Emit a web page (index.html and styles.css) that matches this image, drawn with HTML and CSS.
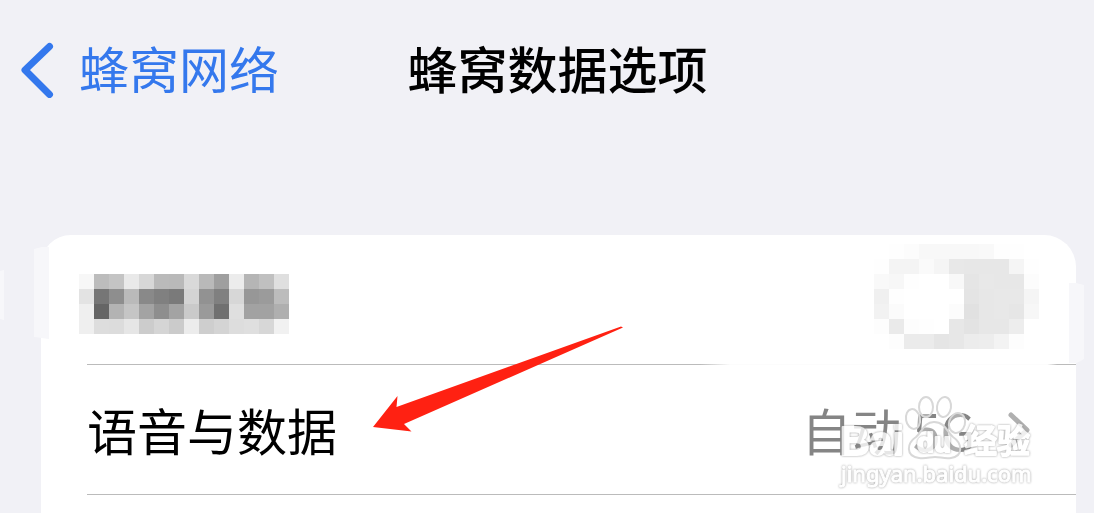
FILE: index.html
```html
<!DOCTYPE html>
<html lang="zh-CN">
<head>
<meta charset="utf-8">
<meta name="viewport" content="width=device-width, initial-scale=1">
<title>蜂窝数据选项</title>
<link rel="stylesheet" href="styles.css">
</head>
<body>
<header class="nav">
  <a class="back" href="#">
    <svg class="back-icon" viewBox="0 0 34 56" aria-hidden="true"><path d="M28.500 4.500 4 28 28.500 52.500"/></svg>
    <span class="back-label">蜂窝网络</span>
  </a>
  <h1 class="title">蜂窝数据选项</h1>
</header>
<main class="card">
  <svg class="smudge smudge-left" viewBox="0 0 15 92" aria-hidden="true"><path d="M0 2 8 0H15V92L0 90Z"/></svg>
  <svg class="smudge smudge-right" viewBox="0 0 15 98" aria-hidden="true"><path d="M0 0V80H8L15 76V2L7 0Z"/></svg>
  <svg class="smudge smudge-edge" viewBox="0 0 15 50" aria-hidden="true"><path d="M0 4 15 0V50L0 46Z"/></svg>
  <div class="row row-switch">
    <svg class="mosaic mosaic-label" viewBox="0 0 14 4" shape-rendering="crispEdges" aria-hidden="true"></svg>
    <label class="switch">
      <input class="switch-input" type="checkbox" role="switch" aria-label="5G">
      <svg class="mosaic mosaic-switch" viewBox="0 0 11 7" shape-rendering="crispEdges" aria-hidden="true"></svg>
    </label>
  </div>
  <a class="row row-link" href="#">
    <span class="label">语音与数据</span>
    <span class="value">自动 5G</span>
    <svg class="chevron" viewBox="0 0 24 40" aria-hidden="true"><path d="M4 5 20 20 4 35"/></svg>
  </a>
  <svg class="arrow" viewBox="0 0 252 106" aria-hidden="true"><path d="M1 101 25.500 70 24.500 81 249 .5 251 1.500 32 98 39.500 105.500Z"/></svg>
  <svg class="watermark" viewBox="0 0 204 102" role="img" aria-label="Baidu 经验">
    <g class="paw">
      <ellipse cx="79" cy="28" rx="7" ry="10" transform="rotate(-10 79 28)"/>
      <ellipse cx="92" cy="16" rx="7" ry="10"/>
      <ellipse cx="110" cy="16" rx="7" ry="10" transform="rotate(8 110 16)"/>
      <ellipse cx="123" cy="32" rx="8" ry="10" transform="rotate(15 123 32)"/>
      <path d="M100 31C90 31 88 41 82 46 73 52 71 65 85 67 92 68 96 66 101 66 106 66 111 68 117 67 130 65 128 52 119 46 113 41 111 31 100 31Z"/>
    </g>
    <g class="mark">
      <text class="mark-brand" x="6" y="64">Bai</text>
      <text class="mark-du" x="83" y="61">du</text>
      <text class="mark-cjk" x="130" y="62">经验</text>
      <text class="mark-url" x="7" y="91">jingyan.baidu.com</text>
    </g>
  </svg>
</main>
<script src="mosaic.js"></script>
</body>
</html>
```
FILE: mosaic.js
```js
const labelCells = [
  'f7 bc c4 e9 d7 ba b9 d9 b9 9f ec b5 c0 df',
  'e3 76 8e ba 89 80 7a d4 92 80 d7 97 9b bc',
  'ef 65 b3 c5 a3 8e a3 ca 9a 70 df a2 a2 af',
  'ef dd dc e6 cc d5 cb ec ce d4 dd df d7 f1'
];
const switchCells = [
  'ff fe fc f8 f8 f8 f8 f9 fe fe ff',
  'fe f4 f4 fa f5 e8 e7 e7 e7 f5 fe',
  'f9 f7 fe ff ff f8 e5 e8 e7 e7 fc',
  'f0 fe ff ff ff ff e4 e7 e8 e8 f5',
  'f2 fb ff ff ff fc e1 e7 e8 e6 f7',
  'fd ea fd fe ff e7 e3 e7 e7 ed ff',
  'ff fd eb eb e5 e7 ec ed f3 fd ff'
];

function drawMosaic(selector, rows) {
  const svg = document.querySelector(selector);
  rows.forEach((row, y) => row.split(' ').forEach((shade, x) => {
    const cell = document.createElementNS('http://www.w3.org/2000/svg', 'rect');
    cell.setAttribute('x', x);
    cell.setAttribute('y', y);
    cell.setAttribute('width', 1);
    cell.setAttribute('height', 1);
    cell.setAttribute('fill', '#' + shade.repeat(3));
    svg.appendChild(cell);
  }));
}

drawMosaic('.mosaic-label', labelCells);
drawMosaic('.mosaic-switch', switchCells);
```
FILE: styles.css
```css
* {
  box-sizing: border-box;
}

body {
  margin: 0;
  min-height: 100vh;
  display: flex;
  flex-direction: column;
  overflow-x: hidden;
  background: #f1f1f6;
  color: #000;
  font-family: "Noto Sans CJK SC", sans-serif;
  font-size: 50px;
  line-height: 72px;
}

a {
  color: inherit;
  text-decoration: none;
}

.nav {
  display: grid;
  grid-template-columns: 1fr auto 1fr;
  align-items: center;
  padding: 31px 0 33px 21px;
}

.back {
  display: flex;
  align-items: center;
  gap: 24px;
  color: #3478ed;
  white-space: nowrap;
}

.back-label,
.title {
  padding-bottom: 6px;
}

.back-icon {
  width: 34px;
  height: 56px;
  fill: none;
  stroke: #3478ed;
  stroke-width: 7;
  stroke-linecap: round;
  stroke-linejoin: round;
}

.title {
  margin: 0;
  font-size: 50px;
  font-weight: 500;
  white-space: nowrap;
}

.card {
  position: relative;
  flex: 1;
  margin: 93px 18px 0 41px;
  background: #fff;
  border-radius: 30px 32px 0 0;
}

.row {
  display: flex;
  align-items: center;
  height: 130px;
  margin-left: 46px;
  border-bottom: 1px solid #bbb;
}

.row-switch {
  align-items: flex-end;
  justify-content: space-between;
  padding: 0 37px 15px 0;
  border-image: linear-gradient(90deg, #bbb 62%, #fcfcfc 65%, #fcfcfc 97%, #bbb 98%) 1;
}

.mosaic {
  display: block;
}

.mosaic-label {
  width: 210px;
  height: 60px;
  margin: 0 0 15px -8px;
}

.switch {
  position: relative;
}

.switch-input {
  position: absolute;
  inset: 0;
  width: 100%;
  height: 100%;
  margin: 0;
  opacity: 0;
}

.mosaic-switch {
  width: 165px;
  height: 105px;
}

.row-link {
  padding-right: 45px;
}

.label {
  flex: 1;
}

.label,
.value {
  padding-bottom: 2px;
}

.value {
  color: #858585;
}

.chevron {
  width: 24px;
  height: 40px;
  margin-left: 32px;
  fill: none;
  stroke: #b0b0b0;
  stroke-width: 5;
  stroke-linecap: round;
  stroke-linejoin: round;
}

.smudge {
  position: absolute;
  width: 15px;
  fill: #f7f7fa;
}

.smudge-left {
  top: 12px;
  left: -7px;
  height: 92px;
}

.smudge-right {
  top: 48px;
  right: -8px;
  height: 98px;
}

.smudge-edge {
  top: 35px;
  left: -52px;
  height: 50px;
}

.arrow {
  position: absolute;
  top: 91px;
  left: 331px;
  width: 252px;
  height: 106px;
  fill: #ff2112;
}

.watermark {
  position: absolute;
  top: 156px;
  right: 38px;
  width: 204px;
  height: 102px;
}

.paw {
  fill: rgba(255, 255, 255, 0.35);
  stroke: #d8d8d8;
  stroke-width: 2;
}

.mark {
  fill: #fff;
  stroke: #fff;
  stroke-width: 2;
  stroke-linejoin: round;
  opacity: 0.8;
  filter: drop-shadow(0 0 1px #888);
  font-family: "Liberation Sans", "Noto Sans CJK SC", sans-serif;
}

.mark-brand {
  font-size: 41px;
  font-weight: 700;
}

.mark-du {
  font-size: 28px;
  font-weight: 700;
}

.mark-cjk {
  font-size: 33px;
  font-weight: 500;
}

.mark-url {
  font-family: "Noto Sans", sans-serif;
  font-size: 22px;
  stroke-width: 1;
}
```
